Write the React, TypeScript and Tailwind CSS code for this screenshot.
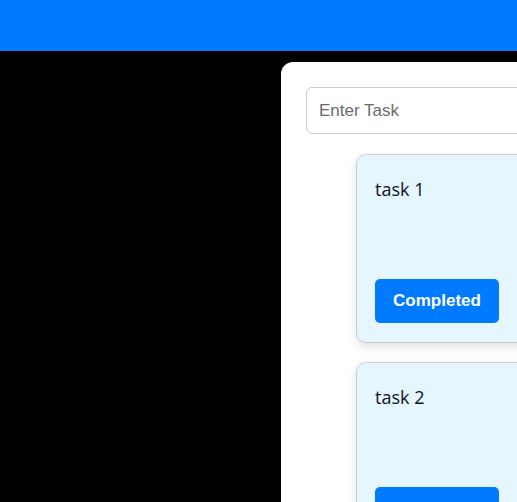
import React from 'react';

const tasks = ["task 1", "task 2", "task 3"];

const TaskCard: React.FC<{ title: string }> = ({ title }) => (
  <div className="flex h-[189px] w-[300px] shrink-0 flex-col justify-between rounded-[10px] border border-[#cccccc] bg-[#e6f6ff] px-[18px] pb-[19px] pt-[21px] shadow-[0_4px_10px_rgba(0,0,0,0.12)]">
    <p className="font-['Open_Sans',sans-serif] text-[18px] leading-[26px] text-[#111122]">{title}</p>
    <button className="h-[44px] w-[124px] rounded-[5px] bg-[#007bff] font-['Liberation_Sans',Arial,sans-serif] text-[17px] font-bold text-white">
      Completed
    </button>
  </div>
);

export default function App() {
  return (
    <div className="flex h-[502px] flex-col overflow-hidden bg-black">
      <header className="h-[51px] shrink-0 bg-[#007bff]" />
      <main className="ml-[281px] mt-[11px] flex w-[500px] flex-1 flex-col rounded-tl-[12px] bg-white p-[25px]">
        <input
          type="text"
          placeholder="Enter Task"
          className="h-[47px] w-full rounded-[6px] border border-[#cccccc] px-[12px] font-['Liberation_Sans',Arial,sans-serif] text-[17px] text-[#333] placeholder:text-[#6b6b6b] outline-none"
        />
        <div className="mt-[20px] flex flex-col gap-[19px] pl-[50px]">
          {tasks.map((t) => (
            <TaskCard key={t} title={t} />
          ))}
        </div>
      </main>
    </div>
  );
}
